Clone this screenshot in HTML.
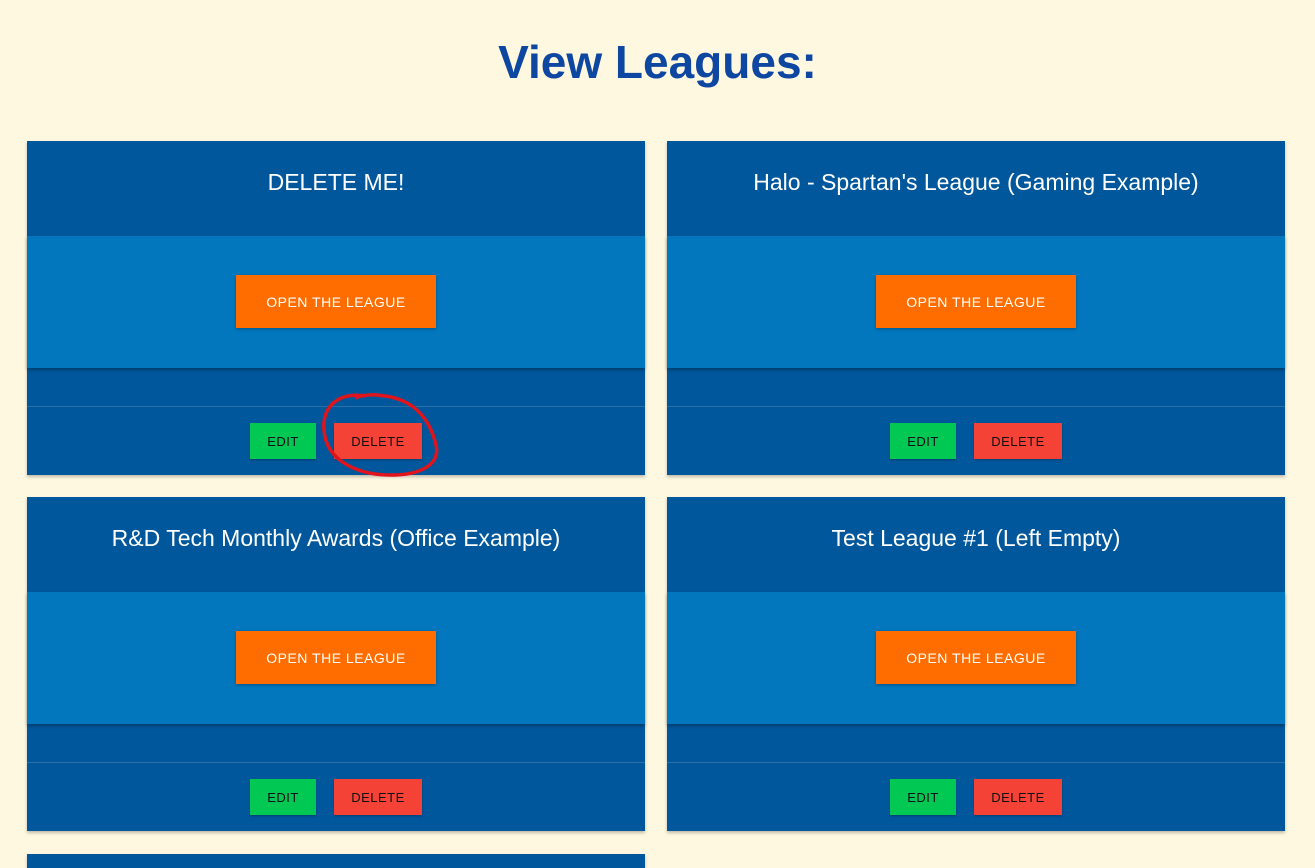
<!DOCTYPE html>
<html style="height:868px;overflow:hidden"><head><style>
body{margin:0;background:#fff8e1;width:1315px;height:868px;overflow:hidden;font-family:"Liberation Sans",sans-serif;position:relative}
h1{position:absolute;top:32px;left:0;width:1315px;margin:0;text-align:center;color:#0d47a1;font-size:46px;font-weight:bold;line-height:60px}
.card{position:absolute;width:618px;height:334px;background:#01579b;box-shadow:0 2px 3px rgba(0,0,0,.25)}
.t{position:absolute;top:0;left:0;width:100%;height:95px;line-height:82px;text-align:center;color:#fff;font-size:23px}
.m{position:absolute;top:95px;left:0;width:100%;height:132px;background:#0277bd;box-shadow:0 2px 3px rgba(0,0,0,.3)}
.o{position:absolute;left:209px;top:39px;width:200px;height:53px;background:#ff6d00;color:#fff;font-size:14px;text-align:center;line-height:55px;letter-spacing:.5px;box-shadow:0 1px 3px rgba(0,0,0,.3)}
.line{position:absolute;top:265px;left:0;width:100%;height:1px;background:#2c6ea6}
.b{position:absolute;top:282px;height:36px;line-height:37px;font-size:13px;text-align:center;color:#111;letter-spacing:.5px;box-shadow:0 1px 2px rgba(0,0,0,.3)}
.e{left:223px;width:66px;background:#00c853}
.d{left:307px;width:88px;background:#f44336}
</style></head><body>
<h1>View Leagues:</h1>
<div class="card" style="left:27px;top:141px"><div class="t">DELETE ME!</div><div class="m"><div class="o">OPEN THE LEAGUE</div></div><div class="line"></div><div class="b e">EDIT</div><div class="b d">DELETE</div></div>
<div class="card" style="left:667px;top:141px"><div class="t">Halo - Spartan's League (Gaming Example)</div><div class="m"><div class="o">OPEN THE LEAGUE</div></div><div class="line"></div><div class="b e">EDIT</div><div class="b d">DELETE</div></div>
<div class="card" style="left:27px;top:497px"><div class="t">R&amp;D Tech Monthly Awards (Office Example)</div><div class="m"><div class="o">OPEN THE LEAGUE</div></div><div class="line"></div><div class="b e">EDIT</div><div class="b d">DELETE</div></div>
<div class="card" style="left:667px;top:497px"><div class="t">Test League #1 (Left Empty)</div><div class="m"><div class="o">OPEN THE LEAGUE</div></div><div class="line"></div><div class="b e">EDIT</div><div class="b d">DELETE</div></div>
<div class="card" style="left:27px;top:854px;height:14px"></div>
<svg style="position:absolute;left:0;top:0" width="1315" height="868"><path d="M365 396 C340 392 322 405 324 430 C326 462 360 476 395 475 C425 474 440 462 436 445 C430 420 415 400 385 396 C372 394 362 395 355 398" fill="none" stroke="#e0141c" stroke-width="3.5"/></svg>
</body></html>
